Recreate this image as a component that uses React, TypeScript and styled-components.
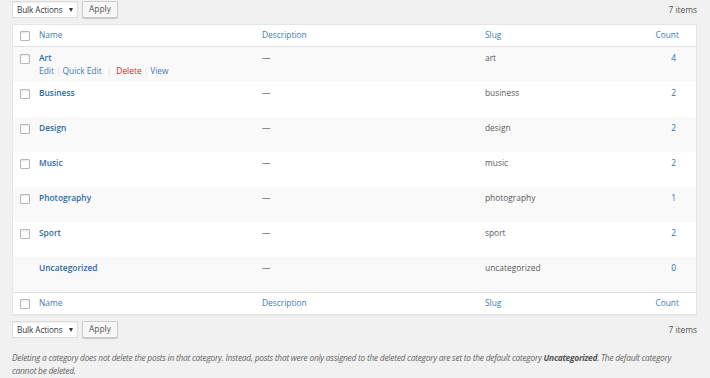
import styled, { createGlobalStyle } from 'styled-components';

const GlobalStyle = createGlobalStyle`
  html, body {
    margin: 0;
    padding: 0;
    background: #f1f1f1;
  }
  body {
    font-family: "Open Sans", "Noto Sans", sans-serif;
    font-size: 8.4px;
    color: #444;
  }
`;

const Page = styled.div`
  width: 710px;
  padding: 1px 13px 0 12px;
  box-sizing: border-box;
`;

const TableNav = styled.div<{ $bottom?: boolean }>`
  display: flex;
  align-items: center;
  gap: 4px;
  height: 17px;
  margin: ${(p) => (p.$bottom ? '6px 0 0' : '0 0 6px')};
`;

const SelectBox = styled.div`
  display: flex;
  align-items: center;
  justify-content: space-between;
  box-sizing: border-box;
  width: 66px;
  height: 17px;
  padding: 0 4px 0 4px;
  background: #fff;
  border: 1px solid #ddd;
  box-shadow: inset 0 1px 2px rgba(0, 0, 0, 0.07);
  color: #32373c;
  font-size: 8.2px;
  letter-spacing: -0.1px;
`;

const Caret = styled.span`
  width: 0;
  height: 0;
  border-left: 2px solid transparent;
  border-right: 2px solid transparent;
  border-top: 4px solid #333;
`;

const Button = styled.button`
  box-sizing: border-box;
  height: 17px;
  padding: 0 6px;
  font-family: inherit;
  font-size: 8.4px;
  color: #555;
  background: #f7f7f7;
  border: 1px solid #ccc;
  border-radius: 2px;
  box-shadow: 0 1px 0 #ccc;
  line-height: 1;
`;

const ItemCount = styled.span`
  margin-left: auto;
  color: #555;
  font-size: 8.4px;
`;

const Table = styled.table`
  width: 685px;
  table-layout: fixed;
  border-collapse: separate;
  border-spacing: 0;
  background: #fff;
  border: 1px solid #e5e5e5;
  box-shadow: 0 1px 1px rgba(0, 0, 0, 0.04);
`;

const HeadCell = styled.th<{ $align?: string; $foot?: boolean }>`
  height: 21px;
  padding: 0 ${(p) => (p.$align === 'right' ? '17px' : '6px')} 0 6px;
  text-align: ${(p) => p.$align || 'left'};
  font-weight: 400;
  color: #3d7bb3;
  vertical-align: middle;
  line-height: 1;
  ${(p) =>
    p.$foot ? 'border-top: 1px solid #e1e1e1;' : 'border-bottom: 1px solid #e1e1e1;'}
`;

const CheckHead = styled.th<{ $foot?: boolean }>`
  padding: 0 0 0 7px;
  vertical-align: middle;
  ${(p) =>
    p.$foot ? 'border-top: 1px solid #e1e1e1;' : 'border-bottom: 1px solid #e1e1e1;'}
`;

const Row = styled.tr<{ $alt: boolean }>`
  height: 35px;
  background: ${(p) => (p.$alt ? '#f9f9f9' : '#fff')};
`;

const Cell = styled.td<{ $align?: string }>`
  padding: 4px ${(p) => (p.$align === 'right' ? '20px' : '6px')} 5px 6px;
  vertical-align: top;
  text-align: ${(p) => p.$align || 'left'};
  line-height: 13px;
  color: #5a5a5a;
`;

const CheckCell = styled.td`
  padding: 7px 0 0 7px;
  vertical-align: top;
`;

const CheckBox = styled.span`
  display: block;
  box-sizing: border-box;
  width: 10px;
  height: 10px;
  background: #fff;
  border: 1px solid #b4b9be;
  border-radius: 1px;
  box-shadow: inset 0 1px 2px rgba(0, 0, 0, 0.1);
`;

const NameLink = styled.a`
  display: block;
  color: #2f6ba3;
  font-weight: 600;
  text-decoration: none;
`;

const CountLink = styled.a`
  color: #2f72ad;
  text-decoration: none;
`;

const RowActions = styled.div<{ $shown: boolean }>`
  display: flex;
  align-items: center;
  visibility: ${(p) => (p.$shown ? 'visible' : 'hidden')};
  color: #ddd;
  height: 13px;
`;

const ActionLink = styled.span<{ $danger?: boolean }>`
  color: ${(p) => (p.$danger ? '#cc2b2b' : '#3d7bb3')};
`;

const Sep = styled.span<{ $wide?: boolean }>`
  padding: 0 ${(p) => (p.$wide ? '5px' : '2px')};
  color: #ddd;
`;

const Note = styled.p`
  margin: 13px 0 0;
  width: 685px;
  font-style: italic;
  line-height: 13px;
  letter-spacing: -0.25px;
  color: #666;
  font-size: 8.4px;

  strong {
    font-weight: 700;
    color: #555;
  }
`;

type Category = { name: string; slug: string; count: number; locked?: boolean };

const categories: Category[] = [
  { name: 'Art', slug: 'art', count: 4 },
  { name: 'Business', slug: 'business', count: 2 },
  { name: 'Design', slug: 'design', count: 2 },
  { name: 'Music', slug: 'music', count: 2 },
  { name: 'Photography', slug: 'photography', count: 1 },
  { name: 'Sport', slug: 'sport', count: 2 },
  { name: 'Uncategorized', slug: 'uncategorized', count: 0, locked: true },
];

const Nav = ({ bottom }: { bottom?: boolean }) => (
  <TableNav $bottom={bottom}>
    <SelectBox>
      Bulk Actions
      <Caret />
    </SelectBox>
    <Button>Apply</Button>
    <ItemCount>7 items</ItemCount>
  </TableNav>
);

const HeaderRow = ({ foot }: { foot?: boolean }) => (
  <tr>
    <CheckHead $foot={foot}>
      <CheckBox />
    </CheckHead>
    <HeadCell $foot={foot}>Name</HeadCell>
    <HeadCell $foot={foot}>Description</HeadCell>
    <HeadCell $foot={foot}>Slug</HeadCell>
    <HeadCell $foot={foot} $align="right">
      Count
    </HeadCell>
  </tr>
);

const App = () => {
  return (
    <Page>
      <GlobalStyle />
      <Nav />
      <Table>
        <colgroup>
          <col style={{ width: 20 }} />
          <col style={{ width: 223 }} />
          <col style={{ width: 223 }} />
          <col />
          <col style={{ width: 62 }} />
        </colgroup>
        <thead>
          <HeaderRow />
        </thead>
        <tbody>
          {categories.map((c, i) => (
            <Row key={c.slug} $alt={i % 2 === 0}>
              {c.locked ? <CheckCell /> : (
                <CheckCell>
                  <CheckBox />
                </CheckCell>
              )}
              <Cell>
                <NameLink>{c.name}</NameLink>
                <RowActions $shown={i === 0}>
                  <ActionLink>Edit</ActionLink>
                  <Sep>|</Sep>
                  <ActionLink>Quick Edit</ActionLink>
                  <Sep $wide>|</Sep>
                  <ActionLink $danger>Delete</ActionLink>
                  <Sep>|</Sep>
                  <ActionLink>View</ActionLink>
                </RowActions>
              </Cell>
              <Cell>—</Cell>
              <Cell>{c.slug}</Cell>
              <Cell $align="right">
                <CountLink>{c.count}</CountLink>
              </Cell>
            </Row>
          ))}
        </tbody>
        <tfoot>
          <HeaderRow foot />
        </tfoot>
      </Table>
      <Nav bottom />
      <Note>
        Deleting a category does not delete the posts in that category. Instead, posts that were
        only assigned to the deleted category are set to the default category{' '}
        <strong>Uncategorized</strong>. The default category cannot be deleted.
      </Note>
    </Page>
  );
};

export default App;
